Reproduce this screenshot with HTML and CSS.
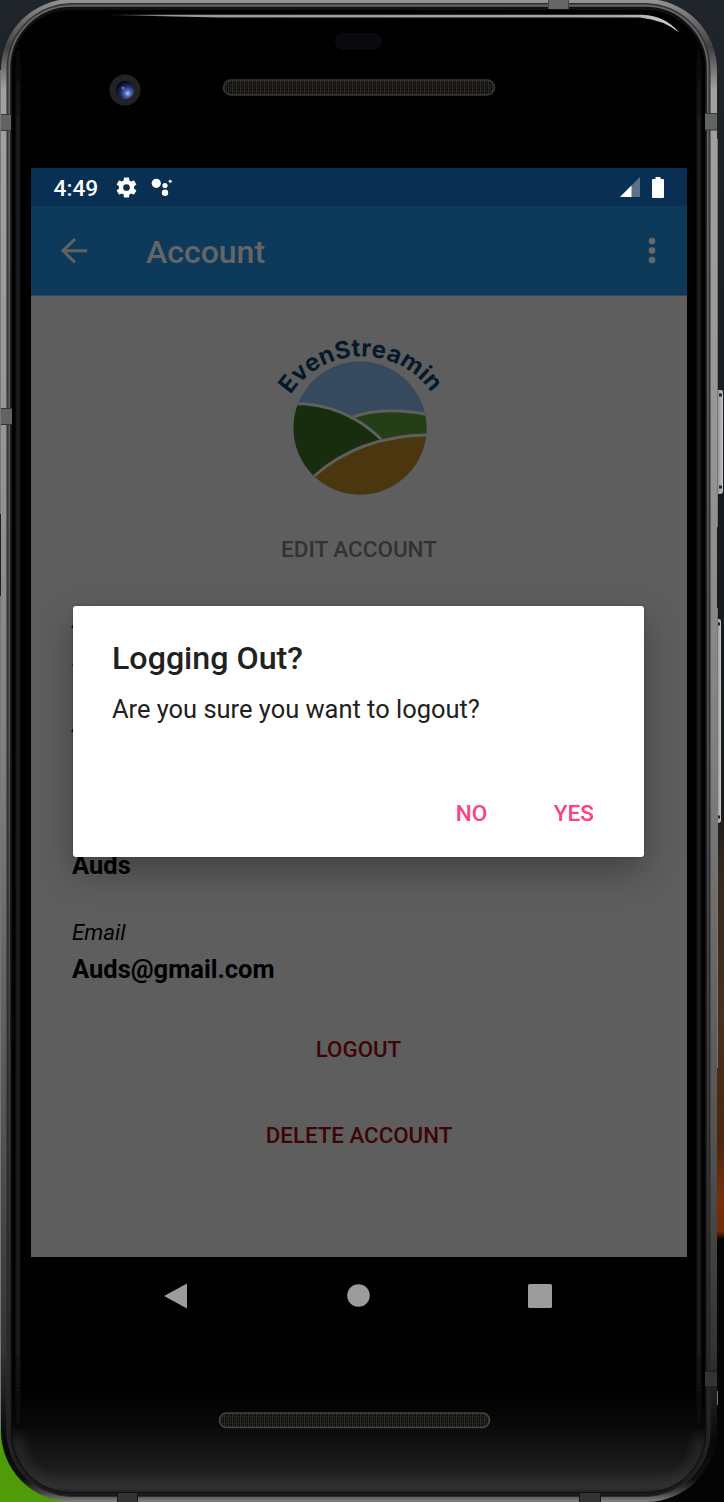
FILE: index.html
```html
<!DOCTYPE html>
<html lang="en">
<head>
<meta charset="utf-8">
<title>Account</title>
<link rel="stylesheet" href="styles.css">
</head>
<body>
<div class="stage">
<svg class="device" viewBox="0 0 724 1502" width="724" height="1502" aria-hidden="true">
  <defs>
    <linearGradient id="wall" x1="0" y1="0" x2="0" y2="1">
      <stop offset="0" stop-color="#20252b"/><stop offset=".08" stop-color="#1b2228"/><stop offset=".35" stop-color="#151a1f"/><stop offset=".54" stop-color="#1a1a1a"/><stop offset=".57" stop-color="#30251b"/><stop offset=".67" stop-color="#45301f"/><stop offset=".76" stop-color="#4c260f"/><stop offset=".8" stop-color="#782f0a"/><stop offset=".82" stop-color="#702a06"/><stop offset=".825" stop-color="#040404"/><stop offset="1" stop-color="#040404"/>
    </linearGradient>
    <linearGradient id="metal" x1="0" y1="0" x2="0" y2="1">
      <stop offset="0" stop-color="#969696"/><stop offset=".015" stop-color="#6b6b6b"/><stop offset=".032" stop-color="#404040"/><stop offset=".06" stop-color="#a2a2a2"/><stop offset=".3" stop-color="#959595"/><stop offset=".5" stop-color="#808080"/><stop offset=".75" stop-color="#545454"/><stop offset=".9" stop-color="#333"/><stop offset=".96" stop-color="#080808"/><stop offset=".985" stop-color="#101010"/><stop offset=".994" stop-color="#444"/><stop offset="1" stop-color="#858080"/>
    </linearGradient>
    <linearGradient id="trim" x1="0" y1="0" x2="0" y2="1">
      <stop offset="0" stop-color="#686868"/><stop offset=".5" stop-color="#505050"/><stop offset=".9" stop-color="#333"/><stop offset="1" stop-color="#1c1c1c"/>
    </linearGradient>
    <linearGradient id="rail" x1="0" y1="0" x2="0" y2="1">
      <stop offset="0" stop-color="#484848"/><stop offset=".5" stop-color="#404040"/><stop offset=".9" stop-color="#222"/><stop offset="1" stop-color="#181818"/>
    </linearGradient>
    <linearGradient id="sheen" x1="0" y1="0" x2="0" y2="1">
      <stop offset="0" stop-color="#000"/><stop offset=".35" stop-color="#090909"/><stop offset=".75" stop-color="#1b1b1b"/><stop offset=".95" stop-color="#2e2e2e"/><stop offset="1" stop-color="#1c1c1c"/>
    </linearGradient>
    <linearGradient id="stripe" x1="0" y1="0" x2="0" y2="1502" gradientUnits="userSpaceOnUse">
      <stop offset=".02" stop-color="#1a1a1a" stop-opacity="0"/><stop offset=".08" stop-color="#1a1a1a"/><stop offset=".9" stop-color="#1a1a1a"/><stop offset=".96" stop-color="#1a1a1a" stop-opacity="0"/>
    </linearGradient>
    <linearGradient id="gloss" x1="0" x2="1"><stop offset="0" stop-color="#999" stop-opacity="0"/><stop offset=".12" stop-color="#999"/><stop offset=".9" stop-color="#a5aaaa"/><stop offset="1" stop-color="#ccd4d4"/></linearGradient>
    <linearGradient id="button" x1="0" x2="1"><stop offset="0" stop-color="#555"/><stop offset=".5" stop-color="#999"/><stop offset="1" stop-color="#c5c5c5"/></linearGradient>
    <radialGradient id="lens" cx=".65" cy=".68" r=".65"><stop offset="0" stop-color="#bcc9fa"/><stop offset=".25" stop-color="#536cb8"/><stop offset=".6" stop-color="#1c2b60"/><stop offset="1" stop-color="#080a19"/></radialGradient>
    <pattern id="mesh" width="4" height="3" patternUnits="userSpaceOnUse"><rect width="4" height="3" fill="#12110d"/><path d="M.5 0V3M2.500 0V2" stroke="#2e2c25"/></pattern>
    <filter id="soft" filterUnits="userSpaceOnUse" x="0" y="0" width="724" height="1502"><feGaussianBlur stdDeviation="1.2"/></filter>
    <filter id="soft-wide" filterUnits="userSpaceOnUse" x="0" y="1200" width="724" height="302"><feGaussianBlur stdDeviation="6"/></filter>
    <clipPath id="glass"><rect x="12" y="10" width="693" height="1482" rx="59"/></clipPath>
  </defs>
  <rect width="724" height="1502" fill="url(#wall)"/>
  <path d="M0 70H3V1430H0z" fill="#707a7a"/>
  <path d="M0 514h3v82H0z" fill="#202325"/>
  <path d="M0 1430h80v72H0z" fill="#4f9c08"/>
  <path d="M714 393q0-3 3-3h4q2 0 2 3v98q0 3-3 3h-6z" fill="url(#button)"/>
  <path d="M714 622q0-3 3-3h2q2 0 2 3v198q0 3-3 3h-4z" fill="url(#button)"/>
  <path d="M719 395h3M719 487h3M716 624h4M716 817h4" stroke="#222" stroke-width="3"/>
  <path d="M717.500 139V527M717.500 608V1068M717.500 1391v14" stroke="#777"/>
  <rect x="1" y="-1" width="716" height="1503" rx="71" fill="url(#metal)"/>
  <rect x="7" y="3.500" width="703" height="1493" rx="65" fill="url(#rail)" stroke="#2c2c2c"/>
  <rect x="9.500" y="6" width="698" height="1488" rx="62" fill="#111" stroke="url(#trim)" stroke-width="1.500"/>
  <rect x="12" y="10" width="693" height="1482" rx="59" fill="#000"/>
  <g clip-path="url(#glass)">
    <path d="M12 1390H705V1492H12z" fill="url(#sheen)"/>
    <path d="M17 1435Q20 1488 75 1488H642Q698 1488 701 1435" fill="none" stroke="#303030" stroke-width="7" filter="url(#soft-wide)"/>
    <path d="M18 30V1450M699 30V1450" stroke="url(#stripe)" stroke-width="5" filter="url(#soft)"/>
  </g>
  <path d="M96 14.700H642Q666 16 679 32.500Q664 20 640 17.500H220Z" fill="url(#gloss)"/>
  <path d="M548 0h21v9h-21z" fill="#666"/><path d="M548.500 0v9M568.500 0v9" stroke="#444"/>
  <path d="M1 114h10v17H1zM705 114h12v16h-12zM1 408h11v17H1z" fill="#626464"/>
  <path d="M1 114.500h10M1 130.500h10M705 113.500h12M705 130h12M1 408.500h11M1 424.500h11" stroke="#363636"/>
  <path d="M117 1493h21v9h-21zM579 1493h22v9h-22zM705 1371h12v16h-12z" fill="#343232"/>
  <path d="M117.500 1493v9M137.500 1493v9M579.500 1493v9M600.500 1493v9M705 1371h12M705 1387h12" stroke="#161616"/>
  <rect x="334.500" y="33" width="47.500" height="16.500" rx="8.200" fill="#090a0f"/>
  <circle cx="125" cy="90" r="15.500" fill="#232222"/>
  <circle cx="125" cy="90" r="9.200" fill="url(#lens)"/><circle cx="123" cy="88" r="1.500" fill="#5974cc"/>
  <rect x="223.500" y="80" width="271" height="15" rx="7.500" fill="url(#mesh)" stroke="#393936" stroke-width="1.600"/>
  <rect x="219.500" y="1413" width="270" height="14.500" rx="7.200" fill="url(#mesh)" stroke="#454542" stroke-width="1.600"/>
</svg>

<main class="screen">
  <header class="status">
    <span class="clock">4:49</span>
    <svg class="gear" viewBox="2 2 20 20" width="21" height="21"><path fill="#fff" d="M19.140 12.940c.04-.3.060-.61.060-.94s-.02-.64-.07-.94l2.030-1.580c.18-.14.23-.41.12-.61l-1.920-3.320c-.12-.22-.37-.29-.59-.22l-2.390.96c-.5-.38-1.030-.7-1.620-.94l-.36-2.540A.48.48 0 0 0 13.920 2.400h-3.840c-.24 0-.43.170-.47.410l-.36 2.540c-.59.240-1.130.570-1.620.94l-2.390-.96c-.22-.08-.47 0-.59.220L2.740 8.870c-.12.210-.08.470.12.610l2.030 1.580c-.05.300-.09.630-.09.940s.02.640.07.940l-2.030 1.580c-.18.140-.23.410-.12.610l1.920 3.320c.12.220.37.290.59.220l2.390-.96c.5.380 1.030.7 1.620.94l.36 2.540c.05.240.24.410.48.410h3.840c.24 0 .44-.17.470-.41l.36-2.540c.59-.24 1.130-.56 1.620-.94l2.390.96c.22.080.47 0 .59-.22l1.920-3.320c.12-.22.070-.47-.12-.61zM12 15.200a3.200 3.200 0 1 1 0-6.400 3.200 3.200 0 0 1 0 6.400"/></svg>
    <svg class="assistant" viewBox="0 0 22 20" width="22" height="20" fill="#fff"><circle cx="5.300" cy="6.300" r="4.600"/><circle cx="14" cy="8.500" r="2.600"/><circle cx="14" cy="15.800" r="3.200"/><circle cx="19.200" cy="4.200" r="1.500"/></svg>
    <svg class="signal" viewBox="0 0 20 20" width="20" height="20"><path d="M20 0V20H0z" fill="#5a718a"/><path d="M11.500 8.500V20H0z" fill="#fff"/></svg>
    <svg class="battery" viewBox="0 0 12 21" width="12" height="21"><path d="M3.500 0h5v2H11q1 0 1 1v17q0 1-1 1H1q-1 0-1-1V3q0-1 1-1h2.500z" fill="#fff"/></svg>
  </header>
  <nav class="toolbar">
    <svg class="back" viewBox="0 0 26 26" width="26" height="26"><path d="M26 12.700H2M14 1L2 12.700L14 24.500" fill="none" stroke="#626262" stroke-width="3"/></svg>
    <h1 class="heading">Account</h1>
    <svg class="more" viewBox="0 0 8 28" width="8" height="28" fill="#686868"><circle cx="4" cy="4" r="3.300"/><circle cx="4" cy="13.500" r="3.300"/><circle cx="4" cy="23" r="3.300"/></svg>
  </nav>
  <section class="content">
    <svg class="logo" viewBox="269 330 180 170" width="180" height="170">
      <defs><clipPath id="disc"><circle cx="360" cy="428" r="66.500"/></clipPath><path id="arc" d="M290.500 395A85 85 0 0 1 437 402"/></defs>
      <g clip-path="url(#disc)">
        <path d="M290 360H430V500H290z" fill="#36495d"/>
        <path d="M350 418Q382 405 430 415V440L380 445z" fill="#243e17"/>
        <path d="M290 403.500Q343 402 382 440L312 480H290z" fill="#182d0e"/>
        <path d="M313 477Q360 435 430 435V500H290z" fill="#4b370f"/>
        <path d="M350 418Q382 405 430 415M290 403.500Q343 402 381 439M313 477Q360 435 430 435" fill="none" stroke="#5f5f5f" stroke-width="3"/>
      </g>
      <text class="wordmark"><textPath href="#arc" textLength="166" lengthAdjust="spacing">EvenStreamin</textPath></text>
    </svg>
    <div class="edit">EDIT ACCOUNT</div>
    <dl class="details">
      <dt class="label">A</dt>
      <dd class="value">A</dd>
      <dt class="label">A</dt>
      <dd class="value"></dd>
      <dt class="label"></dt>
      <dd class="value">Auds</dd>
      <dt class="label">Email</dt>
      <dd class="value">Auds@gmail.com</dd>
    </dl>
    <div class="action logout">LOGOUT</div>
    <div class="action">DELETE ACCOUNT</div>
  </section>
  <footer class="keys">
    <svg viewBox="0 0 24 26" width="24" height="26"><path d="M0 13L23 .500V25.500z" fill="#9c9c9c"/></svg>
    <svg viewBox="0 0 24 24" width="24" height="24"><circle cx="12.500" cy="11.500" r="11.300" fill="#9c9c9c"/></svg>
    <svg viewBox="0 0 24 24" width="24" height="24"><rect width="24" height="24" rx="1.500" fill="#9c9c9c"/></svg>
  </footer>
  <div class="dialog" role="dialog">
    <h2 class="title">Logging Out?</h2>
    <p class="message">Are you sure you want to logout?</p>
    <div class="choices"><span>NO</span><span>YES</span></div>
  </div>
</main>
</div>
</body>
</html>
```
FILE: styles.css
```css
* { box-sizing: border-box; margin: 0; padding: 0; }
body { background: #000; font-family: Roboto, "Liberation Sans", sans-serif; }
svg { display: block; flex: none; }
.stage { display: grid; width: 724px; height: 1502px; overflow: hidden; }
.device, .screen { grid-area: 1 / 1; }
.screen { position: relative; display: flex; flex-direction: column; width: 656px; height: 1167px; margin: 168px 0 0 31px; }
.status { display: flex; align-items: center; height: 38px; padding: 0 23px 0 22.500px; background: #092f53; }
.clock { width: 62px; color: #fff; font-size: 22.7px; font-weight: 500; line-height: 38px; padding-top: 3px; }
.assistant { margin-left: 14.500px; }
.signal { margin-left: auto; }
.battery { margin-left: 12px; }
.toolbar { display: flex; align-items: center; height: 90px; padding: 0 31px 0 30px; background: #0d3a5b; border-bottom: 1px solid #314959; }
.heading { margin: 3px auto 0 59px; color: #656565; font-size: 32px; font-weight: 500; line-height: 40px; }
.content { height: 961px; padding-top: 34px; background: #5e5e5e; text-align: center; }
.logo { margin: 0 auto; overflow: visible; }
.wordmark { fill: #06192a; font-family: Inter, "Open Sans", sans-serif; font-size: 24px; font-weight: 700; }
.edit { margin-top: 35px; color: #323232; font-size: 22.5px; font-weight: 500; line-height: 28px; }
.details { display: grid; grid-template-rows: repeat(4, 28px 76px); height: 379px; margin: 43px 0 0 41px; text-align: left; color: #000; }
.value { margin-top: 7px; font-size: 25.5px; font-weight: 700; line-height: 32px; }
.label { font-size: 22.3px; font-style: italic; line-height: 28px; }
.action { color: #3e0506; font-size: 22.3px; font-weight: 500; line-height: 28px; }
.logout { margin: 50px 1px 58px 0; }
.keys { display: flex; align-items: center; justify-content: space-between; height: 78px; padding: 0 135px 0 133px; }
.dialog { position: absolute; left: 42.300px; top: 438px; width: 571px; height: 251px; padding: 32px 50.500px 0 38.700px; border-radius: 3px; background: #fff; color: #212121; box-shadow: 0 15px 36px rgba(0, 0, 0, .3), 0 0 3px rgba(0, 0, 0, .2); }
.title { font-size: 32.200px; font-weight: 500; line-height: 40px; }
.message { margin-top: 15px; font-size: 25.450px; line-height: 32px; }
.choices { display: flex; justify-content: flex-end; gap: 66.500px; margin-top: 74px; color: #ff4081; font-size: 22.500px; font-weight: 500; line-height: 28px; }
```
